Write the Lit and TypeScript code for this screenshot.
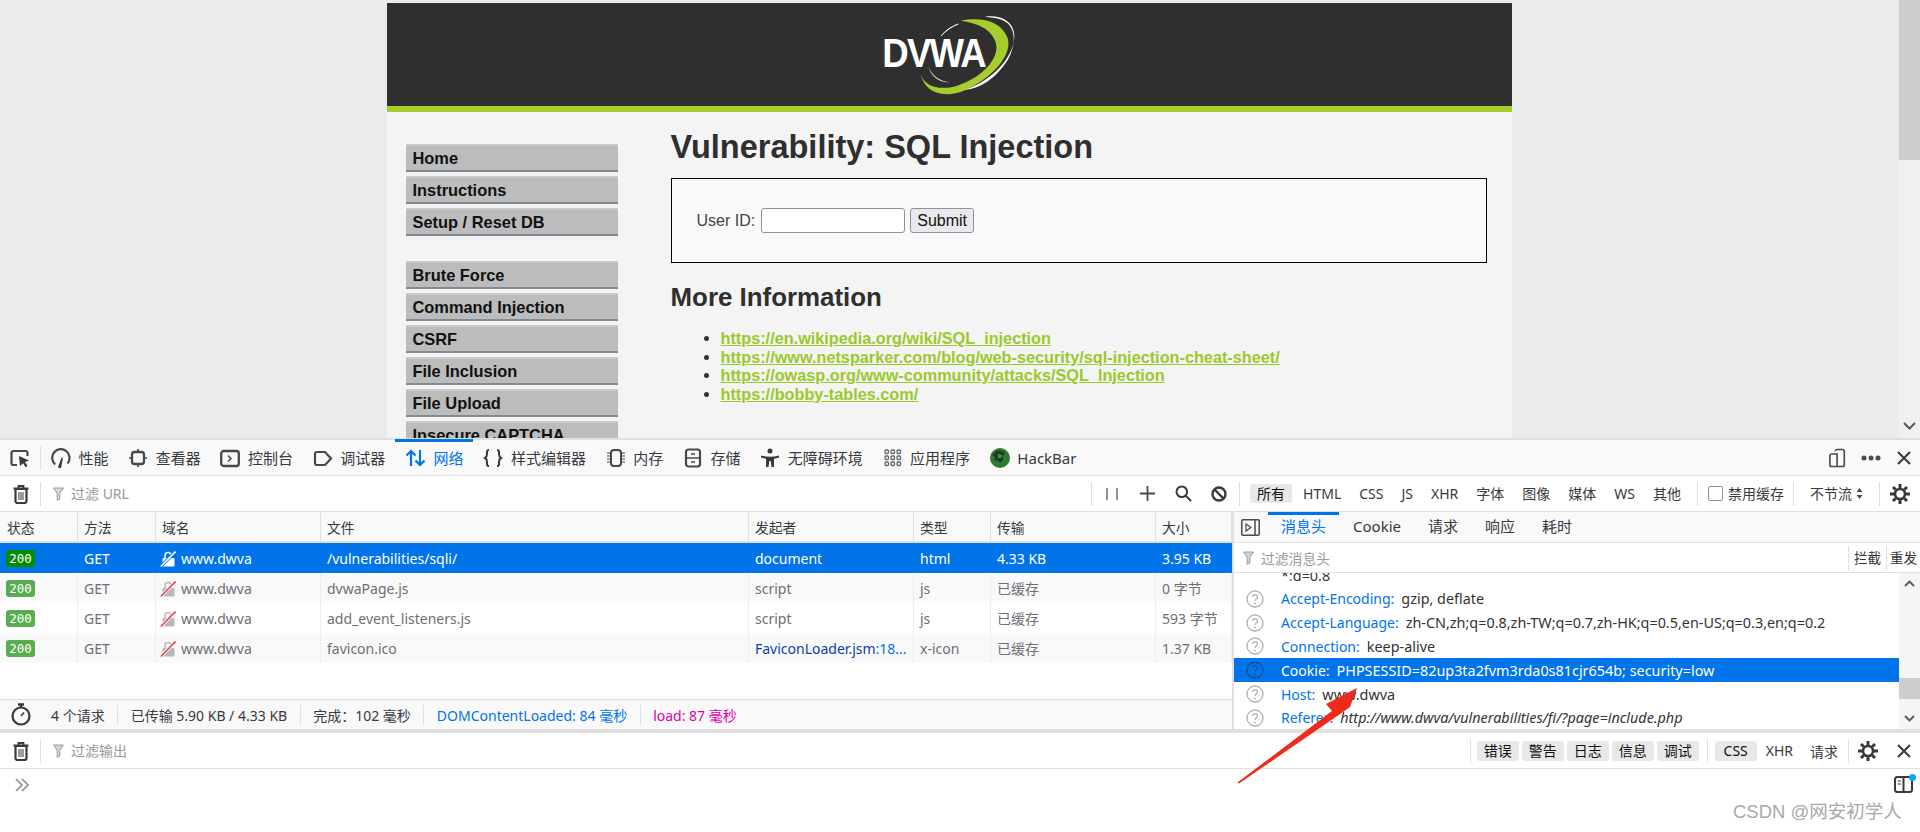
import { LitElement, html, css } from "lit";
import { customElement } from "lit/decorators.js";

const ic = (c: any, w = 20, h = 20, vb = "0 0 20 20") =>
  html`<svg class="ic" width=${w} height=${h} viewBox=${vb} fill="none" stroke="#47474c" stroke-width="2">${c}</svg>`;
const el = (tag: string, attrs: Record<string, string>) => {
  const ns = document.createElementNS("http://www.w3.org/2000/svg", tag);
  Object.entries(attrs).forEach(([k, v]) => ns.setAttribute(k, v));
  return ns;
};
const shapes = (defs: [string, Record<string, string>][]) => {
  const g = el("g", {});
  defs.forEach(([t, a]) => g.appendChild(el(t, a)));
  return g;
};
const P = (d: string, extra: Record<string, string> = {}): [string, Record<string, string>] => ["path", { d, ...extra }];
const R = (x: number, y: number, w: number, h: number, rx = 2, extra: Record<string, string> = {}): [string, Record<string, string>] =>
  ["rect", { x: "" + x, y: "" + y, width: "" + w, height: "" + h, rx: "" + rx, ...extra }];
const C = (cx: number, cy: number, r: number, extra: Record<string, string> = {}): [string, Record<string, string>] =>
  ["circle", { cx: "" + cx, cy: "" + cy, r: "" + r, ...extra }];

const dark = { fill: "#38383d", stroke: "none" };
const icons = {
  pick: () => ic(shapes([P("M7 17H3.500a2 2 0 0 1-2-2V5a2 2 0 0 1 2-2h12a2 2 0 0 1 2 2v3", {"stroke-width":"2.200"}), P("M9 8l10 4.500-4 1.500 2.500 4-2 1.200-2.300-4L10 18z", dark)])),
  perf: () => ic(shapes([P("M4.200 16.500A8.700 8.700 0 1 1 16.500 15.500", {"stroke-width":"2.200"}), P("M7.600 17.500l3-8 1.300.5-1.500 8.500a1.600 1.600 0 1 1-2.800-1z", dark)])),
  insp: () => ic(shapes([R(4, 4, 12, 12, 2.5, {"stroke-width":"2.300"}), P("M10 1v3M10 16v3M1 10h3M16 10h3", {"stroke-width":"1.600"})])),
  cons: () => ic(shapes([R(1.200, 3, 17.600, 15, 2.5, {"stroke-width":"2.300"}), P("M8 7.500l3 3-3 3", {"stroke-width":"1.500"})])),
  debug: () => ic(shapes([P("M4 4h8l6 6.500-6 6.500H4a2 2 0 0 1-2-2V6a2 2 0 0 1 2-2z", {"stroke-width":"2.200"})])),
  net: () => html`<svg class="ic" width="21" height="20" viewBox="0 0 21 20" fill="none" stroke="#0074e8" stroke-width="2.200"><path d="M6 18V3M1.500 7.500L6 3l4.500 4.500M15 2v15M10.500 12.500L15 17l4.500-4.500"/></svg>`,
  style: () => html`<svg class="ic" width="20" height="20" viewBox="0 0 20 20" fill="none" stroke="#38383d" stroke-width="2"><path d="M6 2C3.500 2 4 4 4 6s0 3-2 4c2 1 2 2 2 4s-.5 4 2 4M14 2c2.500 0 2 2 2 4s0 3 2 4c-2 1-2 2-2 4s.5 4-2 4"/></svg>`,
  mem: () => ic(shapes([R(5, 2, 10, 16, 3), P("M1 5h3M1 8h3M1 11h3M1 14h3M16 5h3M16 8h3M16 11h3M16 14h3", {"stroke-width":"1"})])),
  store: () => ic(shapes([R(3, 1.500, 14, 17, 2.500, {"stroke-width":"2.200"}), P("M3 10h14M8 6h4M8 14h4", {"stroke-width":"1.600"})])),
  a11y: () => ic(shapes([C(10, 3, 2.500, dark), P("M1 7.500c6 1.800 12 1.800 18 0v2c-2 .6-3.500 1-5 1.200V19h-2.500l-.8-6h-1.400l-.8 6H6v-8.300c-1.500-.2-3-.6-5-1.200z", dark)])),
  apps: () => ic(shapes([0, 1, 2].flatMap((y) => [0, 1, 2].map((x) => R(2 + x * 6, 2 + y * 6, 3.500, 3.500, 1, {"stroke-width":"1.300", stroke:"#66666a"}) as [string, Record<string,string>])))),
  hack: () => html`<svg class="ic" width="20" height="20" viewBox="0 0 20 20"><circle cx="10" cy="10" r="10" fill="#2f7d32"/><path d="M5 4c4-3 9-1 10 2l-3 2 2 3-4 4-3-3-3 1 1-4-3-2z" fill="#1e3d1f"/><path d="M8 6l4 1-1 3-3 0z" fill="#3f9a42"/></svg>`,
  trash: () => ic(shapes([P("M4.500 5h11v12a2 2 0 0 1-2 2h-7a2 2 0 0 1-2-2z", {"stroke-width":"2.200", stroke:"#38383d"}), P("M2.500 4.500h15M7.500 4V2h5v2", {"stroke-width":"1.800", stroke:"#38383d"}), P("M8 8v8M10 8v8M12 8v8", {"stroke-width":"1", stroke:"#38383d"})])),
  filter: () => html`<svg class="ic" width="11" height="14" viewBox="0 0 11 14" fill="#d4d4d6" stroke="#9a9a9c" stroke-width="1"><path d="M.6 1h9.800L6.800 6.500V12L4.200 13.300V6.500z"/></svg>`,
  pause: () => html`<svg class="ic" width="12" height="14" viewBox="0 0 12 14" stroke="#4a4a4f" stroke-width="1.200"><path d="M1 1v12M11 1v12"/></svg>`,
  plus: () => html`<svg class="ic" width="15" height="15" viewBox="0 0 15 15" stroke="#4a4a4f" stroke-width="1.800"><path d="M7.500 0v15M0 7.500h15"/></svg>`,
  search: () => html`<svg class="ic" width="17" height="17" viewBox="0 0 17 17" fill="none" stroke="#38383d" stroke-width="2"><circle cx="6.800" cy="6.800" r="5.300"/><path d="M10.500 10.500l5.500 5.500"/></svg>`,
  block: () => html`<svg class="ic" width="16" height="16" viewBox="0 0 16 16" fill="none" stroke="#38383d" stroke-width="2.400"><circle cx="8" cy="8" r="6.500"/><path d="M3.500 3.500l9 9"/></svg>`,
  gear: () => html`<svg class="ic" width="20" height="20" viewBox="0 0 20 20" fill="none" stroke="#38383d"><circle cx="10" cy="10" r="5" stroke-width="2.600"/><path d="M10 0v4M10 16v4M0 10h4M16 10h4M3 3l2.800 2.800M14.200 14.200L17 17M3 17l2.800-2.800M14.200 5.800L17 3" stroke-width="3"/></svg>`,
  close: () => html`<svg class="ic" width="14" height="14" viewBox="0 0 14 14" stroke="#38383d" stroke-width="2"><path d="M1 1l12 12M13 1L1 13"/></svg>`,
  dock: () => ic(shapes([P("M7 2.500a2 2 0 0 1 2-2h6a2 2 0 0 1 2 2v15a2 2 0 0 1-2 2H9M9 5.500H3a2 2 0 0 0-2 2v10a2 2 0 0 0 2 2h6z", {"stroke-width":"1.800"})]), 18, 20),
  dots: () => html`<svg class="ic" width="20" height="6" viewBox="0 0 20 6" fill="#4a4a4f"><circle cx="3" cy="3" r="2.500"/><circle cx="10" cy="3" r="2.500"/><circle cx="17" cy="3" r="2.500"/></svg>`,
  toggle: () => html`<svg class="ic" width="19" height="17" viewBox="0 0 19 17" fill="none" stroke="#4a4a4f" stroke-width="1.500"><rect x=".8" y=".8" width="17.400" height="15.400" rx="1"/><path d="M14 1v15"/><path d="M5 5l5 3.500L5 12z" stroke-width="1.200"/></svg>`,
  watch: () => html`<svg class="ic" width="20" height="23" viewBox="0 0 20 23" fill="none" stroke="#38383d" stroke-width="2.200"><circle cx="10" cy="13" r="8.500"/><path d="M7 1.500h6M10 2v3" stroke-width="2.400"/><path d="M10 13l3-3.500" stroke-width="1.600"/></svg>`,
  chev: () => html`<svg class="ic" width="15" height="14" viewBox="0 0 15 14" fill="none" stroke="#8c8c90" stroke-width="1.600"><path d="M1 1l6 6-6 6M7 1l6 6-6 6"/></svg>`,
  side: () => html`<svg class="ic" width="19" height="17" viewBox="0 0 19 17" fill="none" stroke="#38383d" stroke-width="2"><rect x="1" y="1" width="17" height="15" rx="2.500"/><path d="M9.500 1v15"/><path d="M3.500 5h3.500M3.500 8h3.500" stroke-width="1.200"/></svg>`,
  q: (c = "#b1b1b3") => html`<svg class="ic q" width="18" height="18" viewBox="0 0 18 18" fill="none"><circle cx="9" cy="9" r="8" stroke=${c} stroke-width="1.300"/><path d="M6.500 7c0-3.300 5-3.300 5 0 0 2-2.500 2-2.500 4" stroke=${c} stroke-width="1.300"/><circle cx="9" cy="13.500" r="1" fill=${c}/></svg>`,
  lock: (sel: boolean) => html`<svg class="ic" width="16" height="16" viewBox="0 0 16 16" fill="none"><path d="M5 7V4.500a3 3 0 0 1 6 0" stroke=${sel ? "#fff" : "#b8b8b8"} stroke-width="1.500"/><rect x="2.500" y="7" width="12" height="8.500" rx="1" fill=${sel ? "#fff" : "#b8b8b8"}/><path d="M15.500 .5L.8 15.500" stroke=${sel ? "#0074e8" : "#fff"} stroke-width="3.200"/><path d="M15.500 .5L.8 15.500" stroke=${sel ? "#fff" : "#e2475f"} stroke-width="1.600"/></svg>`,
};

const tabs: [string, () => unknown][] = [
  ["性能", icons.perf], ["查看器", icons.insp], ["控制台", icons.cons], ["调试器", icons.debug], ["网络", icons.net],
  ["样式编辑器", icons.style], ["内存", icons.mem], ["存储", icons.store], ["无障碍环境", icons.a11y], ["应用程序", icons.apps], ["HackBar", icons.hack],
];
const nav1 = ["Home", "Instructions", "Setup / Reset DB"];
const nav2 = ["Brute Force", "Command Injection", "CSRF", "File Inclusion", "File Upload", "Insecure CAPTCHA"];
const links = [
  "https://en.wikipedia.org/wiki/SQL_injection",
  "https://www.netsparker.com/blog/web-security/sql-injection-cheat-sheet/",
  "https://owasp.org/www-community/attacks/SQL_Injection",
  "https://bobby-tables.com/",
];
const heads = ["状态", "方法", "域名", "文件", "发起者", "类型", "传输", "大小"];
const rows = [
  ["GET", "www.dwva", "/vulnerabilities/sqli/", "document", "html", "4.33 KB", "3.95 KB"],
  ["GET", "www.dwva", "dvwaPage.js", "script", "js", "已缓存", "0 字节"],
  ["GET", "www.dwva", "add_event_listeners.js", "script", "js", "已缓存", "593 字节"],
  ["GET", "www.dwva", "favicon.ico", "FAV", "x-icon", "已缓存", "1.37 KB"],
];
const types = ["HTML", "CSS", "JS", "XHR", "字体", "图像", "媒体", "WS", "其他"];
const reqH: [string, string][] = [
  ["Accept-Encoding:", "gzip, deflate"],
  ["Accept-Language:", "zh-CN,zh;q=0.8,zh-TW;q=0.7,zh-HK;q=0.5,en-US;q=0.3,en;q=0.2"],
  ["Connection:", "keep-alive"],
  ["Cookie:", "PHPSESSID=82up3ta2fvm3rda0s81cjr654b; security=low"],
  ["Host:", "www.dwva"],
  ["Referer:", "http://www.dwva/vulnerabilities/fi/?page=include.php"],
];

@customElement("app-root")
export class AppRoot extends LitElement {
  static styles = css`
    :host { display: flex; flex-direction: column; width: 1920px; height: 832px; overflow: hidden; position: relative; background: #fff;
      font-family: "Noto Sans", "Noto Sans CJK SC", sans-serif; font-size: 14px; color: #38383d; }
    .ic { flex: none; display: block; }
    .page { height: 438px; display: flex; background: #ebebeb; flex: none; }
    .view { flex: 1; display: flex; justify-content: center; overflow: hidden; padding-top: 3px; }
    .wrap { width: 1125px; background: #f4f4f4; font-family: "Liberation Sans", Arial, sans-serif; color: #2f2f2f; margin-left: -1px; }
    .hdr { height: 103px; background: #2f2f2f; border-bottom: 6px solid #a5cd2e; display: flex; justify-content: center; align-items: center; }
    .logotxt { font: bold 122px "Liberation Sans", Arial, sans-serif; fill: #fff; letter-spacing: -6px; }
    .body { display: flex; }
    .nav { width: 212px; margin-left: 19px; padding-top: 32px; flex: none; }
    .group { display: flex; flex-direction: column; gap: 4px; margin-bottom: 25px; }
    .nav-i { height: 28px; box-sizing: border-box; background: #bcbcbc; border-top: 2px solid #c9c9c9; border-bottom: 2px solid #7f8a99; padding-left: 7px;
      font: bold 16.400px/24px "Liberation Sans", Arial, sans-serif; color: #111; }
    .main { margin-left: 53px; width: 816px; padding-top: 16px; flex: none; }
    h1 { font-size: 32.500px; line-height: 38px; margin: 0 0 12px; font-weight: bold; }
    .box { height: 85px; box-sizing: border-box; border: 1px solid #000; background: #f9f9f9; display: flex; align-items: center; padding-left: 25px; font-size: 16px; color: #444; }
    .box .in { width: 144px; height: 25px; box-sizing: border-box; margin: 0 5px 0 6px; background: #fff; border: 1px solid #8f8f9d; border-radius: 3px; }
    .box .btn { width: 64px; height: 25px; box-sizing: border-box; background: #e9e9ed; border: 1px solid #8f8f9d; border-radius: 3px; font-size: 16px; line-height: 23px; text-align: center; color: #111; }
    h2 { font-size: 25.900px; line-height: 32px; margin: 18px 0 16px; font-weight: bold; }
    ul { margin: 0; padding-left: 50px; font-size: 16.250px; line-height: 18.700px; }
    li { color: #333; }
    li span { color: #9bc92b; font-weight: bold; text-decoration: underline; }
    .scroll { width: 21px; background: #f0f0f0; display: flex; flex-direction: column; justify-content: space-between; align-items: center; flex: none; position: relative; }
    .thumb { width: 21px; height: 160px; background: #cdcdcd; }
    .arr { height: 10px; margin-bottom: 7px; }

    .bar { display: flex; align-items: center; flex: none; box-sizing: border-box; border-bottom: 1px solid #e0e0e2; }
    .splitter { height: 2px; background: #e0e0e2; flex: none; }
    .tabs { height: 36px; background: #f9f9fa; padding-left: 10px; }
    .tab { display: flex; align-items: center; gap: 7.500px; padding: 0 9.900px; height: 35px; font-size: 15px; color: #38383d; position: relative; white-space: nowrap; box-sizing: border-box; }
    .tab.on { color: #0074e8; }
    .tab.on::before { content: ""; position: absolute; left: 0; right: 0; top: -1px; height: 3px; background: #0074e8; }
    .sep { width: 1px; height: 24px; background: #e0e0e2; flex: none; }
    .sep.first { margin-left: 10px; }
    .spacer { flex: 1; }
    .winbtns { display: flex; align-items: center; padding-right: 9px; }
    .fbar { height: 36px; background: #fff; padding-left: 11px; }
    .fbar .sep, .cbar .sep { margin: 0 12px 0 9px; }
    .fltxt { color: #999; font-size: 14px; margin-left: 7px; white-space: nowrap; position: relative; top: -1px; }
    .toolset { display: flex; align-items: center; }
    .pill { padding: 0 7px; height: 19px; line-height: 19px; border-radius: 3px; margin-right: 4px; font-size: 14px; white-space: nowrap; color: #38383d; }
    .pill.on { background: #e8e8e8; color: #111; }
    .split { display: flex; height: 217px; flex: none; }
    .left { width: 1232px; display: flex; flex-direction: column; flex: none; }
    .grid { display: grid; grid-template-columns: 78px 78px 165px 428px 165px 77px 165px 76px; }
    .th { height: 31px; box-sizing: border-box; background: #f9f9fa; border-right: 1px solid #e0e0e2; border-bottom: 2px solid #e0e0e2; padding-left: 6px; line-height: 31px; color: #38383d; font-size: 13.800px; }
    .th:first-child { padding-left: 7px; }
    .td { height: 30px; box-sizing: border-box; line-height: 29px; padding: 1px 0 0 6px; border-right: 1px solid #ededf0; color: #6e6e73; white-space: nowrap; overflow: hidden; display: flex; align-items: center; }
    .td.odd { background: #f9f9fa; }
    .td.sel { background: #0074e8; color: #fff; border-right-color: #0074e8; }
    .td.dom { gap: 5px; padding-left: 4px; }
    .badge { width: 29px; height: 17px; border-radius: 3px; background: #57ad4f; color: #fff; font: 12.500px/17px "DejaVu Sans Mono", monospace; text-align: center; }
    .sel .badge { background: #058b00; }
    .fav { color: #0a3cae; }
    .fav b { color: #0074e8; font-weight: normal; }
    .grow { flex: 1; }
    .status { height: 30px; box-sizing: border-box; border-top: 1px solid #e0e0e2; background: #f9f9fa; display: flex; align-items: center; padding-left: 11px; }
    .status span { white-space: nowrap; }
    .status .d { width: 1px; height: 20px; background: #e0e0e2; margin: 0 12.500px; }
    .blue { color: #0074e8; }
    .pink { color: #dd00a9; }
    .vs { width: 2px; background: #e0e0e2; flex: none; }
    .right { flex: 1; display: flex; flex-direction: column; min-width: 0; }
    .stabs { height: 31px; background: #f9f9fa; padding-left: 7px; }
    .stab { height: 30px; padding: 0 13px; margin-right: 1px; line-height: 28px; font-size: 15px; position: relative; box-sizing: border-box; white-space: nowrap; color: #38383d; }
    .stab.on { color: #0074e8; }
    .stab.on::before { content: ""; position: absolute; left: 0; right: 0; top: 0; height: 3px; background: #0074e8; }
    .stabs .ic { margin-right: 8px; }
    .sf { height: 30px; padding-left: 9px; }
    .sf .fltxt { font-size: 13.800px; top: 0; }
    .sf .t { font-size: 13.500px; padding: 0 5px; line-height: 24px; height: 24px; color: #333; border-left: 1px solid #e0e0e2; white-space: nowrap; }
    .sf .t + .t { padding: 0 3px; }
    .hlist { flex: 1; display: flex; min-height: 0; overflow: hidden; }
    .hrows { flex: 1; overflow: hidden; display: flex; flex-direction: column; font-size: 14.400px; min-width: 0; }
    .wrapline { height: 8px; line-height: 6px; padding-left: 47px; flex: none; overflow: hidden; color: #333; margin-bottom: 6px; }
    .hr { height: 23.800px; flex: none; display: flex; align-items: center; padding-left: 12px; white-space: nowrap; color: #333; }
    .hr .q { margin-right: 17px; }
    .hr .n { color: #0074e8; margin-right: 7px; font-size: 14px; }
    .hr.sel { background: #0074e8; color: #fff; }
    .hr.sel .n { color: #fff; }
    .hr i { font-style: italic; }
    .s2 { width: 21px; background: #f5f5f5; display: flex; flex-direction: column; justify-content: space-between; align-items: center; padding: 7px 0; box-sizing: border-box; position: relative; }
    .s2 .th2 { position: absolute; left: 0; right: 0; top: 105px; height: 21px; background: #cdcdcd; }
    .bsplit { height: 4px; background: #e0e0e2; flex: none; }
    .cbar { height: 36px; padding-left: 11px; }
    .cpill { width: 42px; height: 20px; line-height: 20px; margin-right: 3px; text-align: center; background: #e8e8e8; border-radius: 3px; color: #111; font-size: 14px; }
    .cplain { font-size: 14px; white-space: nowrap; color: #38383d; }
    .input { height: 64px; flex: none; position: relative; padding: 9px 7px 0 15px; display: flex; justify-content: space-between; align-items: flex-start; }
    .sideic { position: relative; margin-top: -2px; }
    .sideic::after { content: ""; position: absolute; right: -3px; top: -2px; width: 7px; height: 7px; background: #0aa5ff; border-radius: 50%; }
    .wm { position: absolute; left: 1733px; top: 800px; font: 18.500px/24px "Liberation Sans", "Noto Sans CJK SC", sans-serif; color: #a8a8a8; white-space: nowrap; }
    .arrow { position: absolute; left: 0; top: 0; pointer-events: none; }
    .cb { width: 13px; height: 13px; border: 1.500px solid #8f8f9d; border-radius: 2px; background: #fff; margin: 0 5px 0 0; flex: none; }
    .updown { margin-left: 4px; }
  `;

  render() {
    return html`
      <div class="page">
        <div class="view">
          <div class="wrap">
            <div class="hdr">
              <svg width="200" height="90" viewBox="0 0 600 270">
                <path d="M335 32c60-12 120 0 140 50 18 50-40 120-130 160-50 20-115 15-130-50 12 40 60 50 110 35 70-22 130-80 115-130-12-40-55-58-105-65z" fill="#a5cd2e"/>
                <path d="M408 20c50-6 85 15 88 55 2 60-60 135-150 165 60-5 105-50 130-90 22-38 25-80 5-105-15-18-40-22-73-25z" fill="#fff"/>
                <path d="M276 78c15-16 32-28 52-36-18 6-38 18-52 36z" fill="#fff" stroke="#fff" stroke-width="2"/>
                <path d="M238 170c10 25 35 45 65 46-26 4-56-14-65-46z" fill="#ddd"/>
                <text class="logotxt" transform="translate(100 172) scale(.9 1)">DVWA</text>
              </svg>
            </div>
            <div class="body">
              <div class="nav">
                <div class="group">${nav1.map((n) => html`<div class="nav-i">${n}</div>`)}</div>
                <div class="group">${nav2.map((n) => html`<div class="nav-i">${n}</div>`)}</div>
              </div>
              <div class="main">
                <h1>Vulnerability: SQL Injection</h1>
                <div class="box">User ID:<div class="in"></div><div class="btn">Submit</div></div>
                <h2>More Information</h2>
                <ul>${links.map((l) => html`<li><span>${l}</span></li>`)}</ul>
              </div>
            </div>
          </div>
        </div>
        <div class="scroll">
          <div class="thumb"></div>
          <svg class="arr" width="13" height="8" viewBox="0 0 13 8" fill="none" stroke="#555" stroke-width="2"><path d="M1 1l5.500 5.500L12 1"/></svg>
        </div>
      </div>
      <div class="splitter"></div>

      <div class="bar tabs">
        ${icons.pick()}<div class="sep first"></div>
        ${tabs.map(([t, i]) => html`<div class="tab ${t === "网络" ? "on" : ""}">${i()}<span>${t}</span></div>`)}
        <div class="spacer"></div>
        <div class="winbtns">${icons.dock()}<div style="width:14px"></div>${icons.dots()}<div style="width:16px"></div>${icons.close()}</div>
      </div>

      <div class="bar fbar">
        ${icons.trash()}<div class="sep"></div>${icons.filter()}<span class="fltxt">过滤 URL</span>
        <div class="spacer"></div>
        <div class="sep" style="margin:0 14px 0 0"></div>${icons.pause()}<div style="width:22px"></div>${icons.plus()}<div style="width:20px"></div>${icons.search()}<div style="width:19px"></div>${icons.block()}
        <div class="sep" style="margin:0 10px 0 12px"></div>
        <div class="toolset">
          <div class="pill on">所有</div>${types.map((t) => html`<div class="pill">${t}</div>`)}
        </div>
        <div class="sep" style="margin:0 10px 0 5px"></div>
        <div class="cb"></div><span class="pill" style="padding:0;margin:0">禁用缓存</span>
        <div class="sep" style="margin:0 16px 0 9px"></div>
        <span class="pill" style="padding:0;margin:0">不节流</span>
        <svg class="updown" width="7" height="13" viewBox="0 0 7 13" fill="#4a4a4f"><path d="M3.500 1l3 4h-6zM3.500 12l3-4h-6z"/></svg>
        <div class="sep" style="margin:0 10px 0 16px"></div>
        ${icons.gear()}<div style="width:10px"></div>
      </div>

      <div class="split">
        <div class="left">
          <div class="grid">
            ${heads.map((h) => html`<div class="th">${h}</div>`)}
            ${rows.map((r, idx) => {
              const c = `td ${idx === 0 ? "sel" : ""} ${idx % 2 === 1 || idx === 3 ? "odd" : ""}`;
              return html`
                <div class=${c}><span class="badge">200</span></div>
                <div class=${c}>${r[0]}</div>
                <div class="${c} dom">${icons.lock(idx === 0)}<span>${r[1]}</span></div>
                <div class=${c}>${r[2]}</div>
                <div class=${c}>${r[3] === "FAV" ? html`<span class="fav">FaviconLoader.jsm<b>:18...</b></span>` : r[3]}</div>
                <div class=${c}>${r[4]}</div>
                <div class=${c}>${r[5]}</div>
                <div class=${c}>${r[6]}</div>`;
            })}
          </div>
          <div class="grow"></div>
          <div class="status">
            ${icons.watch()}<div style="width:20px"></div>
            <span>4 个请求</span><div class="d"></div>
            <span>已传输 5.90 KB / 4.33 KB</span><div class="d"></div>
            <span>完成：102 毫秒</span><div class="d"></div>
            <span class="blue">DOMContentLoaded: 84 毫秒</span><div class="d"></div>
            <span class="pink">load: 87 毫秒</span>
          </div>
        </div>
        <div class="vs"></div>
        <div class="right">
          <div class="bar stabs">
            ${icons.toggle()}
            <div class="stab on">消息头</div><div class="stab">Cookie</div><div class="stab">请求</div><div class="stab">响应</div><div class="stab">耗时</div>
          </div>
          <div class="bar sf">
            ${icons.filter()}<span class="fltxt">过滤消息头</span>
            <div class="spacer"></div>
            <span class="t">拦截</span><span class="t">重发</span>
          </div>
          <div class="hlist">
            <div class="hrows">
              <div class="wrapline">*;q=0.8</div>
              ${reqH.map(([n, v]) => html`
                <div class="hr ${n === "Cookie:" ? "sel" : ""}">
                  ${icons.q(n === "Cookie:" ? "#0a4f9a" : "#b1b1b3")}
                  <span class="n">${n}</span>
                  ${n === "Referer:" ? html`<i>${v}</i>` : html`<span>${v}</span>`}
                </div>`)}
            </div>
            <div class="s2">
              <svg width="11" height="7" viewBox="0 0 11 7" fill="none" stroke="#555" stroke-width="1.800"><path d="M1 6l4.500-4.500L10 6"/></svg>
              <div class="th2"></div>
              <svg width="11" height="7" viewBox="0 0 11 7" fill="none" stroke="#555" stroke-width="1.800"><path d="M1 1l4.500 4.500L10 1"/></svg>
            </div>
          </div>
        </div>
      </div>

      <div class="bsplit"></div>
      <div class="bar cbar">
        ${icons.trash()}<div class="sep"></div>${icons.filter()}<span class="fltxt">过滤输出</span>
        <div class="spacer"></div>
        <div class="sep" style="margin:0 6px 0 0"></div>
        ${["错误", "警告", "日志", "信息", "调试"].map((t) => html`<div class="cpill">${t}</div>`)}
        <div class="sep" style="margin:0 7px 0 5px"></div>
        <div class="cpill" style="margin:0">CSS</div>
        <div class="cplain" style="margin:0 17px 0 9px">XHR</div>
        <div class="cplain">请求</div>
        <div class="sep" style="margin:0 9px 0 10px"></div>
        ${icons.gear()}<div style="width:19px"></div>${icons.close()}<div style="width:9px"></div>
      </div>
      <div class="input">
        ${icons.chev()}
        <div class="sideic">${icons.side()}</div>
      </div>

      <svg class="arrow" width="1920" height="832" viewBox="0 0 1920 832">
        <path d="M1237.500 782.500L1332 711 1326 704 1357 688 1350 707 1343 712 1239 783.500z" fill="#ee2a1b"/>
      </svg>
      <div class="wm">CSDN @网安初学人</div>
    `;
  }
}
